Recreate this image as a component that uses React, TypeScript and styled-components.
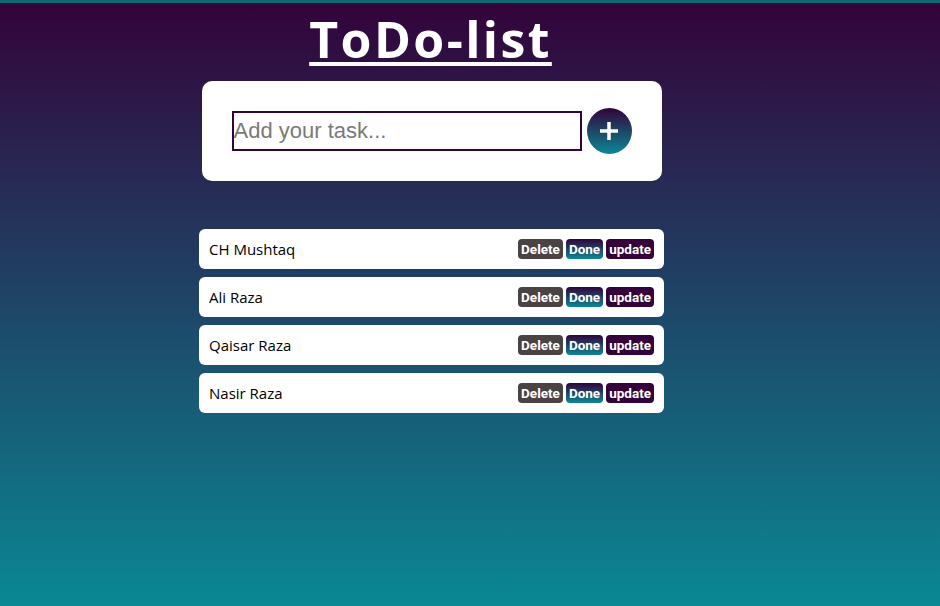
import React from "react"
import styled, { createGlobalStyle } from "styled-components"

const GlobalStyle = createGlobalStyle`
    html, body {
        margin: 0;
        padding: 0;
    }
    body {
        width: 940px;
        height: 606px;
        overflow: hidden;
        font-family: "Open Sans", "Noto Sans", sans-serif;
    }
`

const Page = styled.div`
    width: 940px;
    height: 606px;
    display: flex;
    flex-direction: column;
    background: linear-gradient(to bottom, #33033a 0%, #0a8894 100%);
    border-top: 3px solid #116a70;
    box-sizing: border-box;
`

const Column = styled.div`
    width: 465px;
    margin-left: 199px;
    display: flex;
    flex-direction: column;
    align-items: center;
`

const Title = styled.h1`
    margin: 2px 0 0 -2px;
    height: 76px;
    font-family: "Open Sans", "Noto Sans", sans-serif;
    font-weight: 700;
    font-size: 50px;
    line-height: 68px;
    letter-spacing: 2.4px;
    color: #fff;
    text-decoration: underline;
    text-decoration-thickness: 4px;
    text-underline-offset: 4px;
`

const InputCard = styled.div`
    width: 460px;
    height: 100px;
    box-sizing: border-box;
    background: #fff;
    border-radius: 10px;
    display: flex;
    align-items: center;
    padding-left: 30px;
    gap: 5px;
`

const TaskInput = styled.input`
    width: 350px;
    height: 40px;
    box-sizing: border-box;
    border: 2px solid #33033a;
    font-family: "Liberation Sans", Arial, sans-serif;
    font-size: 22px;
    padding: 0;
    outline: none;
    color: #333;
    &::placeholder {
        color: #7a7a7a;
    }
`

const AddBtn = styled.button`
    width: 45px;
    height: 46px;
    border-radius: 50%;
    border: none;
    padding: 0;
    background: linear-gradient(to bottom, #33033a, #0a8894);
    display: flex;
    align-items: center;
    justify-content: center;
    cursor: pointer;
`

const List = styled.ul`
    list-style: none;
    margin: 48px 0 0 0;
    padding: 0;
    width: 465px;
    display: flex;
    flex-direction: column;
    gap: 8px;
`

const Item = styled.li`
    height: 40px;
    background: #fff;
    border-radius: 6px;
    display: flex;
    align-items: center;
    justify-content: space-between;
    padding: 0 10px 0 10px;
    box-sizing: border-box;
`

const ItemText = styled.span`
    font-family: "Open Sans", "Noto Sans", sans-serif;
    font-size: 15px;
    color: #000;
`

const Actions = styled.div`
    display: flex;
    gap: 3px;
`

const ActionBtn = styled.button<{ $kind: "delete" | "done" | "update" }>`
    height: 20px;
    border: none;
    border-radius: 4px;
    padding: 0 3px;
    font-family: Roboto, "Liberation Sans", Arial, sans-serif;
    font-weight: 700;
    font-size: 13.5px;
    color: #fff;
    cursor: pointer;
    background: ${(p) =>
        p.$kind === "delete"
            ? "#4b4244"
            : p.$kind === "done"
            ? "linear-gradient(to bottom, #33033a, #0a8894)"
            : "#33033a"};
`

const tasks = ["CH Mushtaq", "Ali Raza", "Qaisar Raza", "Nasir Raza"]

export default function App() {
    return (
        <>
            <GlobalStyle />
            <Page>
                <Column>
                    <Title>ToDo-list</Title>
                    <InputCard>
                        <TaskInput placeholder="Add your task..." />
                        <AddBtn>
                            <svg width="22" height="22" viewBox="0 0 22 22">
                                <path d="M11 2v18M2 11h18" stroke="#fff" strokeWidth="3.5" />
                            </svg>
                        </AddBtn>
                    </InputCard>
                    <List>
                        {tasks.map((t) => (
                            <Item key={t}>
                                <ItemText>{t}</ItemText>
                                <Actions>
                                    <ActionBtn $kind="delete">Delete</ActionBtn>
                                    <ActionBtn $kind="done">Done</ActionBtn>
                                    <ActionBtn $kind="update">update</ActionBtn>
                                </Actions>
                            </Item>
                        ))}
                    </List>
                </Column>
            </Page>
        </>
    )
}
